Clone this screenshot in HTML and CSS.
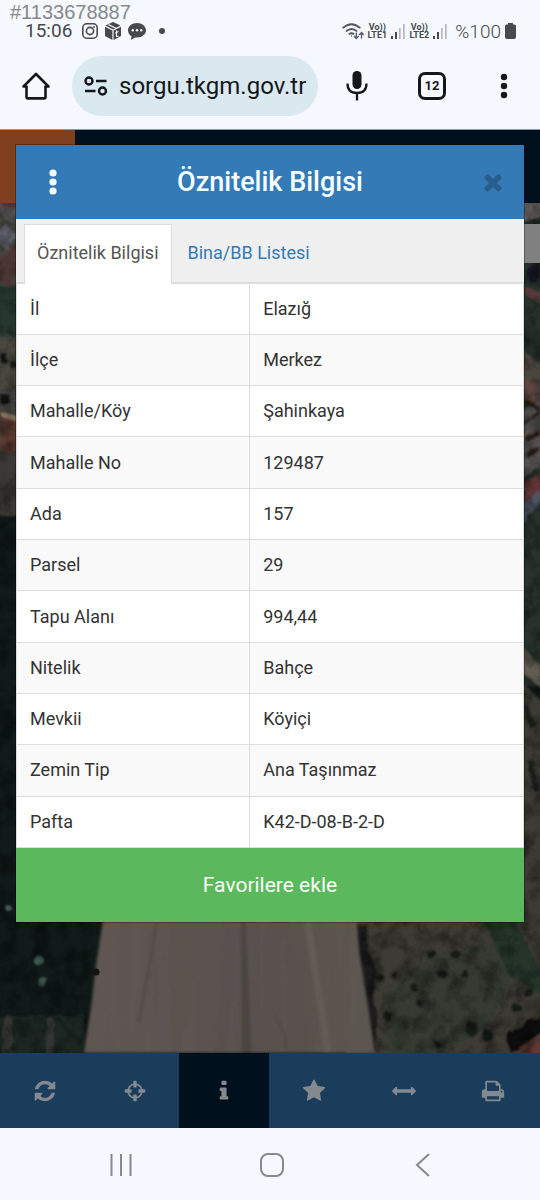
FILE: index.html
```html
<!DOCTYPE html>
<html lang="tr">
<head>
<meta charset="utf-8">
<meta name="viewport" content="width=device-width, initial-scale=1">
<title>Öznitelik Bilgisi</title>
<link rel="stylesheet" href="styles.css">
</head>
<body>
<div class="screen">
  <header class="system">
    <span class="stamp">#1133678887</span>
    <div class="status">
      <span class="clock">15:06</span>
      <svg class="i-insta" width="16" height="16" viewBox="0 0 16 16" fill="none" stroke="#46494d" stroke-width="1.6"><rect x=".8" y=".8" width="14.4" height="14.4" rx="4"/><circle cx="8" cy="8" r="3.6"/><circle cx="12" cy="4" r=".6" fill="#46494d" stroke-width=".8"/></svg>
      <svg class="i-box" width="16" height="18" viewBox="0 0 16 18" fill="#46494d"><path d="M8 0l7.600 3.600L8 7.400.400 3.600z"/><path d="M0 4.800l7.400 3.700V18L0 14zM16 4.800L8.600 8.500V18L16 14z"/><path d="M3.500 2.600l7.500 3.600M11.500 8.500v5.500q.3 1 2 0M10.200 11l3.200-1.500" fill="none" stroke="#f5f9ff" stroke-width="1.200"/></svg>
      <svg class="i-chat" width="18" height="17" viewBox="0 0 18 17"><path d="M9 0c5 0 9 3.200 9 7.200s-4 7.200-9 7.200l-2 0L3 17l.500-3.800C1.400 12 0 9.700 0 7.200 0 3.200 4 0 9 0z" fill="#46494d"/><g fill="#f5f9ff"><circle cx="4.800" cy="7.200" r="1.200"/><circle cx="9" cy="7.200" r="1.200"/><circle cx="13.200" cy="7.200" r="1.200"/></g></svg>
      <svg class="i-dot" width="6" height="6" viewBox="0 0 6 6"><circle cx="3" cy="3" r="3" fill="#46494d"/></svg>
      <div class="signals">
        <svg class="i-wifi" width="23" height="17" viewBox="0 0 23 17" fill="none" stroke="#55585c" stroke-width="1.800"><path d="M.600 5.200Q9.500-2.800 18.400 5.200M3.800 8.400q5.700-4.800 11.400 0M6.800 11.400q2.700-2.200 5.400 0"/><circle cx="9.500" cy="13" r=".7" fill="#55585c" stroke="none"/><path d="M14.300 9.500v6M12 13l2.300 2.500 2.300-2.500M19.500 15.500v-6M17.200 12l2.300-2.500 2.300 2.500" stroke-width="1.300"/></svg>
        <span class="volte"><span>Vo))</span><span>LTE1</span></span>
        <svg class="i-bars" width="14" height="15" viewBox="0 0 14 15"><path d="M0 12h2v3H0zM4 8h2v7H4z" fill="#46494d"/><path d="M8 4h1.700v11H8zM12 0h1.700v15H12z" fill="#b4b8bd"/></svg>
        <span class="volte"><span>Vo))</span><span>LTE2</span></span>
        <svg class="i-bars" width="14" height="15" viewBox="0 0 14 15"><path d="M0 12h2v3H0zM4 8h2v7H4z" fill="#46494d"/><path d="M8 4h1.700v11H8zM12 0h1.700v15H12z" fill="#b4b8bd"/></svg>
        <span class="charge">%100</span>
        <svg width="11" height="16" viewBox="0 0 11 16"><path d="M3 0h5v1.500h1.500Q11 1.500 11 3v11q0 2-2 2H2q-2 0-2-2V3q0-1.500 1.500-1.500H3z" fill="#46494d"/></svg>
      </div>
    </div>
    <div class="browser">
      <button class="tool" aria-label="Ana sayfa"><svg width="28" height="28" viewBox="0 0 28 28" fill="none" stroke="#15181b" stroke-width="2.600" stroke-linejoin="round"><path d="M1.500 14.500L14 2l12.500 12.500H23.500V25q0 1.400-1.400 1.400H5.900Q4.500 26.400 4.500 25V14.500z"/></svg></button>
      <label class="address">
        <svg width="24" height="20" viewBox="0 0 24 20" fill="none" stroke="#15181b" stroke-width="2.400"><circle cx="5" cy="5" r="3.500"/><path d="M12 5h10.500M1 15h10.500"/><circle cx="18.500" cy="15" r="3.500"/></svg>
        <input type="text" value="sorgu.tkgm.gov.tr" aria-label="Adres">
      </label>
      <button class="tool tool-mic" aria-label="Sesli arama"><svg width="22" height="30" viewBox="0 0 22 30"><rect x="6.500" y="0" width="9" height="18" rx="4.500" fill="#15181b"/><path d="M1.500 12.500q0 9.500 9.500 9.500t9.500-9.500M11 22v7.500" fill="none" stroke="#15181b" stroke-width="2.300"/></svg></button>
      <button class="tool" aria-label="Sekmeler"><span class="tabcount">12</span></button>
      <button class="tool" aria-label="Menü"><svg width="8" height="26" viewBox="0 0 8 26" fill="#15181b"><circle cx="4" cy="4" r="3.200"/><circle cx="4" cy="13" r="3.200"/><circle cx="4" cy="22" r="3.200"/></svg></button>
    </div>
  </header>

  <main class="site">
    <div class="backdrop" aria-hidden="true">
      <div class="topstrip"></div>
      <svg class="map" viewBox="0 203 540 850" preserveAspectRatio="none">
        <defs>
          <filter id="rough" x="-5%" y="-5%" width="110%" height="110%"><feTurbulence type="fractalNoise" baseFrequency=".09" numOctaves="2" seed="4"/><feDisplacementMap in="SourceGraphic" scale="7"/><feGaussianBlur stdDeviation="1.3"/></filter>
          <filter id="grain" x="0" y="0" width="100%" height="100%"><feTurbulence type="fractalNoise" baseFrequency=".06" numOctaves="4" seed="9"/><feColorMatrix values="0 0 0 0 0  0 0 0 0 0  0 0 0 0 0  1.800 0 0 0 -.700"/></filter>
          <filter id="rows" x="0" y="0" width="100%" height="100%"><feTurbulence type="fractalNoise" baseFrequency=".1 .008" numOctaves="3" seed="2"/><feColorMatrix values="0 0 0 0 .1  0 0 0 0 .08  0 0 0 0 .08  1.600 0 0 0 -.600"/></filter>
          <filter id="soft"><feGaussianBlur stdDeviation="1.500"/></filter>
          <linearGradient id="soil"><stop offset="0" stop-color="#5f5853"/><stop offset=".5" stop-color="#5a5250"/><stop offset=".75" stop-color="#5a524e"/><stop offset="1" stop-color="#5e5953"/></linearGradient>
          <clipPath id="field"><path d="M106 900H355L359 950 367 1000 375 1053H84L92 1000 96 965z"/></clipPath>
        </defs>
        <rect y="203" width="540" height="850" fill="#101a18"/>
        <g filter="url(#rough)">
          <path d="M-5 195h30v320H-5z" fill="#45443f"/>
          <path d="M-5 200h30v32l-20-12z" fill="#514f50"/>
          <path d="M4 222l12 14-10 12-14-8z" fill="#60626c"/>
          <path d="M0 258l20-18v32l-12 14-12-6z" fill="#4c3634"/>
          <path d="M-5 286h26v50H-5z" fill="#26382f"/>
          <path d="M-5 340l25 5v40l-25 8z" fill="#49483f"/>
          <path d="M0 354h8v8H0zM10 362h8v7h-8zM0 395h10v8H0z" fill="#151716"/>
          <path d="M2 416l18 4v30H0z" fill="#5c3b32"/>
          <path d="M0 412l18 4v5L3 418z" fill="#85775f"/>
          <path d="M-5 450h28v65l-28-6z" fill="#3e3937"/>
          <path d="M520 195h26v490h-26z" fill="#26332c"/>
          <path d="M520 200h22v18l-20 2z" fill="#5e5858"/>
          <path d="M526 270l14-10v18l-10 5z" fill="#151628"/>
          <path d="M526 288l16 4v10l-14-5z" fill="#593838"/>
          <path d="M520 348l24 20v38l-24-10z" fill="#4c4540"/>
          <path d="M524 378l12 6v18h-12z" fill="#5e443e"/>
          <path d="M521 410l22-10v62l-22 18z" fill="#55534f"/>
          <path d="M524 424l16-12M525 440l14-8M526 457l14-8M524 400l16 10" stroke="#2a1a19" stroke-width="4"/>
          <path d="M524 482l16-8v20l-14 14z" fill="#623534"/>
          <path d="M523 506l20-20v14l-20 22z" fill="#4e5464"/>
          <path d="M520 644l24 26v20l-24-20z" fill="#625c51"/>
          <path d="M520 680l24 24v230h-24z" fill="#3e3a35"/>
          <path d="M525 705l8 22M530 760l6 30" stroke="#1d211e" stroke-width="6"/>
          <path d="M345 900h200v160H345z" fill="#3d3a35"/>
          <path d="M384 1000L430 955l60-12 28 22-30 62-40 26h-60z" fill="#353a33"/>
          <path d="M483 918l30 0 30 58v20l-35-22z" fill="#26342c"/>
          <path d="M355 924l12 0 2 28 8 20-5 22 6 20-3 38h-8z" fill="#1a1b1a"/>
          <g fill="#181c19"><circle cx="442" cy="974" r="5"/><circle cx="414" cy="987" r="4"/><circle cx="431" cy="954" r="5"/><circle cx="455" cy="954" r="5"/><circle cx="393" cy="974" r="3"/><circle cx="472" cy="1029" r="7"/><circle cx="488" cy="1036" r="6"/><circle cx="420" cy="1004" r="3"/><circle cx="380" cy="978" r="4"/><circle cx="389" cy="1017" r="5"/><circle cx="517" cy="1009" r="5"/><circle cx="529" cy="993" r="5"/><circle cx="437" cy="1044" r="3"/><circle cx="464" cy="973" r="4"/></g>
          <path d="M506 1034l38-20v17l-34 23z" fill="#08090c"/>
          <path d="M515 1052l28-20v26h-29z" fill="#5c3b34"/>
          <path d="M-5 1016h90v40H-5z" fill="#1e2520"/>
          <path d="M3 1018h9v38H3zM46 1018h8v38h-8z" fill="#303530"/>
          <circle cx="38" cy="960" r="5" fill="#445f55"/><circle cx="43" cy="982" r="5" fill="#3c544b"/><circle cx="8" cy="908" r="3" fill="#526660"/>
        </g>
        <rect y="203" width="540" height="850" filter="url(#grain)" opacity=".5"/>
        <g filter="url(#soft)"><g clip-path="url(#field)">
          <rect x="84" y="900" width="292" height="160" fill="url(#soil)"/>
          <path d="M303 915l7 0 22 140h-7z" fill="#655c55"/>
          <path d="M241 915h4l7 140h-10z" fill="#4b4441"/>
          <path d="M148 972l-9 50M158 915l-10 60M275 1015l10 20 0 14" stroke="#4b4441" stroke-width="1.500" fill="none"/>
          <rect x="84" y="900" width="292" height="160" filter="url(#rows)" opacity=".4"/>
        </g></g>
        <circle cx="96" cy="972" r="3.500" fill="#151212"/>
        <path d="M524 224h16v39h-16z" fill="#808080"/>
      </svg>
    </div>

    <section class="dialog" role="dialog" aria-labelledby="dialog-title">
      <div class="dialog-head">
        <button class="head-btn" aria-label="Seçenekler"><svg width="8" height="26" viewBox="0 0 8 26" fill="#f6ffff"><circle cx="4" cy="4" r="3.600"/><circle cx="4" cy="13" r="3.600"/><circle cx="4" cy="22" r="3.600"/></svg></button>
        <h1 id="dialog-title">Öznitelik Bilgisi</h1>
        <button class="head-btn head-close" aria-label="Kapat"><svg width="26" height="26" viewBox="0 0 1792 1792" fill="#285d8c"><path d="M1490 1322q0 40-28 68l-136 136q-28 28-68 28t-68-28l-294-294-294 294q-28 28-68 28t-68-28l-136-136q-28-28-28-68t28-68l294-294-294-294q-28-28-28-68t28-68l136-136q28-28 68-28t68 28l294 294 294-294q28-28 68-28t68 28l136 136q28 28 28 68t-28 68l-294 294 294 294q28 28 28 68z"/></svg></button>
      </div>
      <div class="tabs" role="tablist">
        <button class="tab active" role="tab" aria-selected="true">Öznitelik Bilgisi</button>
        <button class="tab" role="tab" aria-selected="false">Bina/BB Listesi</button>
      </div>
      <table class="attrs">
        <tbody>
          <tr><th scope="row">İl</th><td>Elazığ</td></tr>
          <tr><th scope="row">İlçe</th><td>Merkez</td></tr>
          <tr><th scope="row">Mahalle/Köy</th><td>Şahinkaya</td></tr>
          <tr><th scope="row">Mahalle No</th><td>129487</td></tr>
          <tr><th scope="row">Ada</th><td>157</td></tr>
          <tr><th scope="row">Parsel</th><td>29</td></tr>
          <tr><th scope="row">Tapu Alanı</th><td>994,44</td></tr>
          <tr><th scope="row">Nitelik</th><td>Bahçe</td></tr>
          <tr><th scope="row">Mevkii</th><td>Köyiçi</td></tr>
          <tr><th scope="row">Zemin Tip</th><td>Ana Taşınmaz</td></tr>
          <tr><th scope="row">Pafta</th><td>K42-D-08-B-2-D</td></tr>
        </tbody>
      </table>
      <button class="favorite">Favorilere ekle</button>
    </section>
  </main>

  <nav class="toolbar" aria-label="Harita araçları">
    <button aria-label="Yenile"><svg viewBox="0 0 1792 1792"><path d="M1639 1056q0 5-1 7-64 268-268 434.500t-478 166.500q-146 0-282.500-55t-243.500-157l-129 129q-19 19-45 19t-45-19-19-45v-448q0-26 19-45t45-19h448q26 0 45 19t19 45-19 45l-137 137q71 66 161 102t187 36q134 0 250-65t186-179q11-17 53-117 8-23 30-23h192q13 0 22.500 9.500t9.500 22.500zm25-800v448q0 26-19 45t-45 19h-448q-26 0-45-19t-19-45 19-45l138-138q-148-137-349-137-134 0-250 65t-186 179q-11 17-53 117-8 23-30 23h-199q-13 0-22.500-9.500t-9.500-22.500v-7q65-268 270-434.500t480-166.500q146 0 284 55.500t245 156.500l130-129q19-19 45-19t45 19 19 45z"/></svg></button>
    <button aria-label="Konum"><svg viewBox="0 0 1792 1792"><path d="M1325 1024h-109q-26 0-45-19t-19-45v-128q0-26 19-45t45-19h109q-32-108-112.500-188.500t-188.500-112.500v109q0 26-19 45t-45 19h-128q-26 0-45-19t-19-45v-109q-108 32-188.500 112.500t-112.500 188.500h109q26 0 45 19t19 45v128q0 26-19 45t-45 19h-109q32 108 112.500 188.500t188.500 112.500v-109q0-26 19-45t45-19h128q26 0 45 19t19 45v109q108-32 188.500-112.500t112.500-188.500zm339-192v128q0 26-19 45t-45 19h-143q-37 161-154.500 278.500t-278.500 154.500v143q0 26-19 45t-45 19h-128q-26 0-45-19t-19-45v-143q-161-37-278.500-154.500t-154.500-278.500h-143q-26 0-45-19t-19-45v-128q0-26 19-45t45-19h143q37-161 154.500-278.500t278.500-154.500v-143q0-26 19-45t45-19h128q26 0 45 19t19 45v143q161 37 278.500 154.500t154.500 278.500h143q26 0 45 19t19 45z"/></svg></button>
    <button class="current" aria-label="Bilgi"><svg viewBox="0 0 1792 1792"><path d="M1216 1344v128q0 26-19 45t-45 19h-512q-26 0-45-19t-19-45v-128q0-26 19-45t45-19h64v-384h-64q-26 0-45-19t-19-45v-128q0-26 19-45t45-19h384q26 0 45 19t19 45v576h64q26 0 45 19t19 45zm-128-1152v192q0 26-19 45t-45 19h-256q-26 0-45-19t-19-45v-192q0-26 19-45t45-19h256q26 0 45 19t19 45z"/></svg></button>
    <button aria-label="Favoriler"><svg viewBox="0 0 1792 1792"><path d="M1728 647q0 22-26 48l-363 354 86 500q1 7 1 20 0 21-10.500 35.500t-30.500 14.500q-19 0-40-12l-449-236-449 236q-22 12-40 12-21 0-31.500-14.500t-10.500-35.500q0-6 2-20l86-500-364-354q-25-27-25-48 0-37 56-46l502-73 225-455q19-41 49-41t49 41l225 455 502 73q56 9 56 46z"/></svg></button>
    <button aria-label="Ölçüm"><svg viewBox="0 0 1792 1792"><path d="M1792 896q0 26-19 45l-256 256q-19 19-45 19t-45-19-19-45v-128h-1024v128q0 26-19 45t-45 19-45-19l-256-256q-19-19-19-45t19-45l256-256q19-19 45-19t45 19 19 45v128h1024v-128q0-26 19-45t45-19 45 19l256 256q19 19 19 45z"/></svg></button>
    <button aria-label="Yazdır"><svg viewBox="0 0 1792 1792"><path d="M448 1536h896v-256h-896v256zm0-640h896v-384h-160q-40 0-68-28t-28-68v-160h-640v640zm1152 64q0-26-19-45t-45-19-45 19-19 45 19 45 45 19 45-19 19-45zm128 0v416q0 13-9.500 22.500t-22.500 9.500h-224v160q0 40-28 68t-68 28h-960q-40 0-68-28t-28-68v-160h-224q-13 0-22.500-9.500t-9.500-22.500v-416q0-79 56.500-135.500t135.500-56.500h64v-544q0-40 28-68t68-28h672q40 0 88 20t76 48l152 152q28 28 48 76t20 88v256h64q79 0 135.500 56.500t56.500 135.500z"/></svg></button>
  </nav>

  <footer class="keys">
    <button aria-label="Son uygulamalar"><svg width="24" height="24" viewBox="0 0 24 24" fill="none" stroke="#85888c" stroke-width="2"><path d="M2.500 1v22M12 1v22M21.500 1v22"/></svg></button>
    <button aria-label="Ana ekran"><svg width="24" height="24" viewBox="0 0 24 24" fill="none" stroke="#85888c" stroke-width="2"><rect x="1" y="1" width="22" height="22" rx="7"/></svg></button>
    <button aria-label="Geri"><svg width="24" height="24" viewBox="0 0 24 24" fill="none" stroke="#85888c" stroke-width="2"><path d="M18 1L6 12l12 11"/></svg></button>
  </footer>
</div>
</body>
</html>
```

FILE: styles.css
```css
* { box-sizing: border-box; }

body {
  margin: 0;
  font-family: Roboto, "Noto Sans", sans-serif;
  font-size: 18px;
  color: #333;
}

button {
  margin: 0;
  padding: 0;
  border: 0;
  background: none;
  font: inherit;
  color: inherit;
  cursor: pointer;
  display: flex;
  align-items: center;
  justify-content: center;
}

svg { display: block; flex: none; }

.screen {
  min-height: 100vh;
  display: flex;
  flex-direction: column;
  background: #f5f9ff;
}

/* system and browser bars */
.system {
  position: relative;
  padding: 20px 0 13px;
  border-bottom: 1px solid #8d99a8;
}

.stamp {
  position: absolute;
  top: 3px;
  left: 10px;
  font: 20px/18px "Liberation Sans", sans-serif;
  color: #86888b;
}

.status {
  display: flex;
  align-items: center;
  height: 22px;
  padding: 0 24px 0 25px;
  color: #46494d;
}

.clock { font-size: 19px; line-height: 18px; width: 57px; }
.i-box { margin-left: 7px; }
.i-chat { margin-left: 7px; }
.i-dot { margin-left: 13px; }

.signals {
  display: flex;
  align-items: center;
  margin-left: auto;
}

.i-wifi { margin-right: 2px; }
.i-bars { margin: 0 4px; }

.volte {
  display: flex;
  flex-direction: column;
  align-items: center;
  width: 20px;
  font-size: 9px;
  line-height: 8px;
  font-weight: 700;
}

.charge {
  margin: 0 4px;
  font-size: 19px;
  font-weight: 300;
}

.browser {
  display: flex;
  align-items: center;
  margin-top: 14px;
}

.tool { width: 72px; height: 60px; }
.tool-mic { width: 78px; }

.tabcount {
  width: 28px;
  height: 28px;
  border: 3px solid #15181b;
  border-radius: 7px;
  font-size: 13px;
  line-height: 22px;
  font-weight: 700;
  color: #15181b;
}

.address {
  flex: 1;
  min-width: 0;
  height: 60px;
  padding-left: 12px;
  border-radius: 30px;
  background: #dae8f0;
  display: flex;
  align-items: center;
  gap: 11px;
}

.address input {
  flex: 1;
  min-width: 0;
  padding: 0;
  border: 0;
  outline: 0;
  background: none;
  font: 24px/32px Roboto, sans-serif;
  color: #15181b;
}

/* page behind the dialog */
.site {
  position: relative;
  flex: 1;
  padding: 15px 16px 131px;
}

.backdrop {
  position: absolute;
  inset: 0;
  display: flex;
  flex-direction: column;
}

.topstrip {
  height: 73px;
  background: linear-gradient(90deg, #80401f 75px, #00101d 75px);
}

.map { flex: 1; width: 100%; min-height: 0; }

/* dialog */
.dialog {
  position: relative;
  background: #fff;
  box-shadow: 0 0 0 1px rgba(0, 0, 0, .3);
}

.dialog-head {
  display: flex;
  align-items: center;
  height: 74px;
  background: #337ab7;
}

.head-btn { width: 74px; height: 74px; }
.head-close { padding-left: 12px; }

.dialog-head h1 {
  flex: 1;
  margin: 0;
  font-size: 27px;
  line-height: 32px;
  font-weight: 500;
  text-align: center;
  color: #f6ffff;
}

.tabs {
  display: flex;
  gap: 3px;
  padding: 5px 8px 0;
  background: #efefef;
  border-bottom: 2px solid #ddd;
}

.tab {
  height: 58px;
  padding: 0 12px 2px;
  border: 1px solid transparent;
  border-bottom: 0;
  color: #337ab7;
}

.tab.active {
  height: 60px;
  margin-bottom: -2px;
  padding-bottom: 4px;
  border-color: #ddd;
  background: #fff;
  color: #555;
}

.attrs {
  width: 100%;
  height: 564px;
  border-collapse: collapse;
}

.attrs th,
.attrs td {
  padding: 0 13px;
  border: 1px solid #ddd;
  border-top: 0;
  line-height: 24px;
  font-weight: 400;
  text-align: left;
}

.attrs th { width: 46%; }
.attrs tr:nth-child(even) { background: #f9f9f9; }

.favorite {
  width: 100%;
  height: 74px;
  background: #5cb85c;
  color: #f8fff8;
  font-size: 21px;
}

/* map tools */
.toolbar {
  position: relative;
  display: flex;
  padding-right: 2px;
  background: #1a3d5c;
}

.toolbar button { flex: 1; height: 75px; }
.toolbar .current { background: #00101d; }
.toolbar svg { width: 24px; height: 24px; fill: #84898f; }

/* system keys */
.keys {
  display: flex;
  justify-content: center;
  padding: 2px 0 0 4px;
}

.keys button { width: 151px; height: 70px; }
```
